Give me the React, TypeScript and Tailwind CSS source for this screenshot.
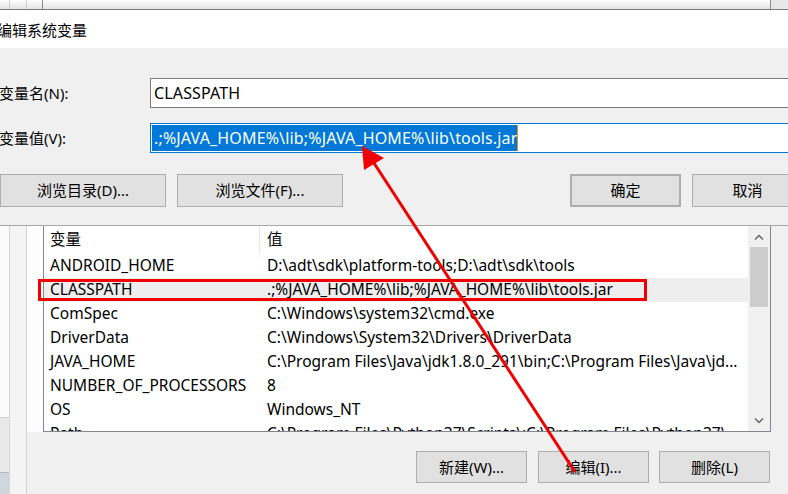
import React from "react";

const rows: [string, string][] = [
  ["ANDROID_HOME", "D:\\adt\\sdk\\platform-tools;D:\\adt\\sdk\\tools"],
  ["CLASSPATH", ".;%JAVA_HOME%\\lib;%JAVA_HOME%\\lib\\tools.jar"],
  ["ComSpec", "C:\\Windows\\system32\\cmd.exe"],
  ["DriverData", "C:\\Windows\\System32\\Drivers\\DriverData"],
  ["JAVA_HOME", "C:\\Program Files\\Java\\jdk1.8.0_291\\bin;C:\\Program Files\\Java\\jd..."],
  ["NUMBER_OF_PROCESSORS", "8"],
  ["OS", "Windows_NT"],
  ["Path", "C:\\Program Files\\Python37\\Scripts\\;C:\\Program Files\\Python37\\"],
];

function Btn({ label, className = "" }: { label: string; className?: string }) {
  return (
    <div
      className={
        "flex shrink-0 items-center justify-center bg-[#e1e1e1] border border-[#adadad] " +
        className
      }
    >
      {label}
    </div>
  );
}

export default function App() {
  return (
    <div className="relative w-[788px] h-[494px] overflow-hidden bg-[#f0f0f0] text-[15px] text-black font-['Noto_Sans','Noto_Sans_CJK_SC',sans-serif]">
      {/* background window top strip */}
      <div className="h-[10px] flex border-b border-[#7a7a7a] bg-gradient-to-b from-white to-[#e4e4e4]">
        <div className="w-[10px] shrink-0 border-r border-[#cfcfcf]" />
        <div className="w-[17px] shrink-0 border-r border-[#cfcfcf]" />
        <div className="w-[16px] shrink-0 border-r border-[#8a8a8a]" />
        <div className="flex-1" />
        <div className="w-[18px] shrink-0 border-l border-[#8a8a8a] bg-[#e8e8e8]" />
      </div>

      {/* edit dialog */}
      <div className="h-[216px] flex flex-col border-b border-[#a8a8a8]">
        <div className="h-[38px] bg-white flex items-center pt-[3px]">
          <span className="-ml-[3px]">编辑系统变量</span>
        </div>
        <div className="flex-1 flex flex-col pt-[30px]">
          <div className="flex items-center h-[30px]">
            <div className="w-[151px] shrink-0 -ml-[1px] pl-0">变量名(N):</div>
            <div className="w-[660px] shrink-0 h-[30px] bg-white border border-[#7a7a7a] flex items-center pl-[3px] text-[16px] tracking-[0.15px]">
              CLASSPATH
            </div>
          </div>
          <div className="flex items-center h-[30px] mt-[15px]">
            <div className="w-[151px] shrink-0 -ml-[1px]">变量值(V):</div>
            <div className="w-[660px] shrink-0 h-[30px] bg-white border border-[#0078d7] flex items-center pl-[1px] text-[16px] tracking-[0.15px]">
              <span className="h-[26px] leading-[26px] bg-[#0078d7] text-white pl-[2px]">
                .;%JAVA_HOME%\lib;%JAVA_HOME%\lib\tools.jar
              </span>
              <span className="h-[26px] w-[1px] bg-[#ff8c00]" />
            </div>
          </div>
          <div className="flex h-[33px] mt-[21px]">
            <Btn label="浏览目录(D)..." className="w-[166px]" />
            <Btn label="浏览文件(F)..." className="w-[166px] ml-[11px]" />
            <Btn label="确定" className="w-[111px] ml-[227px] border-2 border-[#0078d7]" />
            <Btn label="取消" className="w-[111px] ml-[11px]" />
          </div>
        </div>
      </div>

      {/* background environment-variable window */}
      <div className="h-[268px] flex">
        <div className="w-[10px] shrink-0 flex flex-col border-r border-[#d6d6d6]">
          <div className="h-[192px] bg-[#fbfbfb] border-b border-[#d0d0d0]" />
          <div className="h-[55px] bg-[#e9e9e9] border-b border-[#b8b8b8]" />
          <div className="flex-1 bg-[#cfd6de]" />
        </div>
        <div className="w-[17px] shrink-0 bg-[#f4f4f4] border-r border-[#d2d2d2]" />
        <div className="w-[16px] shrink-0 flex flex-col">
          <div className="h-[206px] bg-[#fdfdfd]" />
          <div className="flex-1" />
        </div>

        <div className="w-[728px] shrink-0 flex flex-col">
          <div className="h-[206px] flex border-l border-r border-b border-[#828790] bg-white">
            <div className="flex-1 flex flex-col overflow-hidden text-[15.5px]">
              <div className="h-[28px] shrink-0 flex items-center">
                <div className="w-[216px] shrink-0 pl-[6px] h-full flex items-center border-r border-[#e5e5e5]">
                  变量
                </div>
                <div className="pl-[7px]">值</div>
              </div>
              {rows.map(([k, v]) => (
                <div
                  key={k}
                  className={
                    "h-[24px] shrink-0 flex items-center whitespace-nowrap " +
                    (k === "CLASSPATH" ? "bg-[#eeeeee]" : "")
                  }
                >
                  <div className="w-[216px] shrink-0 pl-[6px]">{k}</div>
                  <div className="pl-[7px]">{v}</div>
                </div>
              ))}
            </div>
            <div className="w-[22px] shrink-0 bg-[#f0f0f0] flex flex-col items-center">
              <div className="h-[21px] flex items-center justify-center">
                <svg width="10" height="6" viewBox="0 0 10 6">
                  <polyline points="1,5.5 5,1.5 9,5.5" fill="none" stroke="#606060" strokeWidth="1.3" />
                </svg>
              </div>
              <div className="w-[18px] h-[60px] bg-[#cdcdcd]" />
              <div className="flex-1" />
              <div className="h-[21px] flex items-center justify-center">
                <svg width="10" height="6" viewBox="0 0 10 6">
                  <polyline points="1,0.5 5,4.5 9,0.5" fill="none" stroke="#606060" strokeWidth="1.3" />
                </svg>
              </div>
            </div>
          </div>
          <div className="flex mt-[19px] h-[32px]">
            <Btn label="新建(W)..." className="w-[111px] ml-[373px]" />
            <Btn label="编辑(I)..." className="w-[111px] ml-[11px]" />
            <Btn label="删除(L)" className="w-[111px] ml-[10px]" />
          </div>
        </div>
        <div className="flex-1 bg-[#f0f0f0]" />
      </div>

      {/* annotations */}
      <div className="absolute left-[38px] top-[279px] w-[609px] h-[22px] border-[3px] border-[#f00000]" />
      <svg className="absolute left-0 top-0" width="788" height="494" viewBox="0 0 788 494">
        <line x1="575" y1="472" x2="372" y2="160" stroke="#f00000" strokeWidth="3" />
        <polygon points="362,146 384,158 364,170" fill="#f00000" />
      </svg>
    </div>
  );
}
